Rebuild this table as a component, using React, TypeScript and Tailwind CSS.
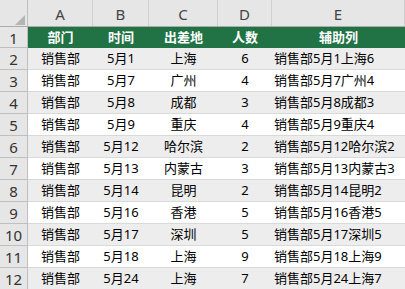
const rows = [
  ['销售部', '5月1', '上海', '6'],
  ['销售部', '5月7', '广州', '4'],
  ['销售部', '5月8', '成都', '3'],
  ['销售部', '5月9', '重庆', '4'],
  ['销售部', '5月12', '哈尔滨', '2'],
  ['销售部', '5月13', '内蒙古', '3'],
  ['销售部', '5月14', '昆明', '2'],
  ['销售部', '5月16', '香港', '5'],
  ['销售部', '5月17', '深圳', '5'],
  ['销售部', '5月18', '上海', '9'],
  ['销售部', '5月24', '上海', '7'],
]

const cols = [
  { letter: 'A', w: 'w-[65px]' },
  { letter: 'B', w: 'w-[56px]' },
  { letter: 'C', w: 'w-[69px]' },
  { letter: 'D', w: 'w-[54px]' },
  { letter: 'E', w: 'flex-1' },
]

const headers = ['部门', '时间', '出差地', '人数', '辅助列']

export default function App() {
  return (
    <div
      className="w-[405px] h-[289px] overflow-hidden bg-white text-[13px] text-black"
      style={{ fontFamily: '"Noto Sans", "Noto Sans CJK SC", sans-serif' }}
    >
      {/* Column letters */}
      <div className="flex h-[27px] bg-[#e6e6e6] border-b border-[#ababab]">
        <div className="w-[28px] shrink-0 relative border-r border-[#bfbfbf]">
          <div className="absolute left-[15px] top-[15px] w-0 h-0 border-l-[10px] border-l-transparent border-b-[10px] border-b-[#b4b4b4]" />
        </div>
        {cols.map((c) => (
          <div
            key={c.letter}
            className={`${c.w} shrink-0 flex items-end justify-center pb-[1px] border-r border-[#cfcfcf] text-[15px] text-[#444]`}
          >
            {c.letter}
          </div>
        ))}
      </div>

      {/* Row 1 - green header */}
      <div className="flex h-[21px]">
        <div className="w-[28px] shrink-0 flex items-center justify-center pt-[3px] bg-[#e6e6e6] border-r border-b border-[#bfbfbf] text-[15px] text-[#333]">
          1
        </div>
        {headers.map((h, i) => (
          <div
            key={h}
            className={`${cols[i].w} shrink-0 flex items-center justify-center bg-[#217346] text-white font-bold`}
          >
            {h}
          </div>
        ))}
      </div>

      {/* Data rows */}
      {rows.map((r, idx) => {
        const shaded = idx % 2 === 0
        return (
          <div key={idx} className={`flex h-[22px] ${shaded ? 'bg-[#ededed]' : 'bg-white'}`}>
            <div className="w-[28px] shrink-0 flex items-center justify-center pt-[2px] bg-[#e6e6e6] border-r border-b border-[#bfbfbf] text-[15px] text-[#333]">
              {idx + 2}
            </div>
            <div className="flex flex-1 border-b border-[#d9d9d9]">
              {r.map((v, i) => (
                <div key={i} className={`${cols[i].w} shrink-0 flex items-center justify-center`}>
                  {v}
                </div>
              ))}
              <div className="flex-1 flex items-center pl-[2px] whitespace-nowrap">{r.join('')}</div>
            </div>
          </div>
        )
      })}
    </div>
  )
}
